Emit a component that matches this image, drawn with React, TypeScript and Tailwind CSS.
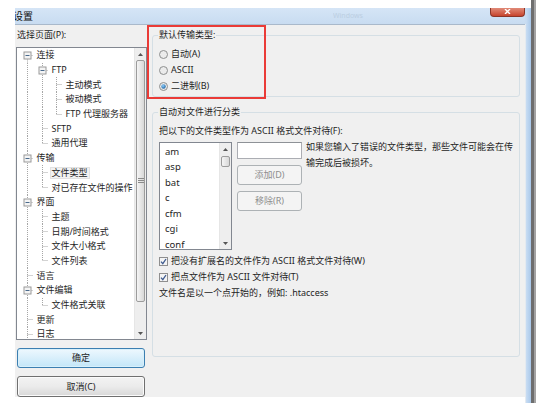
import React from "react";

type TNode = { t: string; l: number; exp?: boolean; sel?: boolean };
const tree: TNode[] = [
  { t: "连接", l: 0, exp: true },
  { t: "FTP", l: 1, exp: true },
  { t: "主动模式", l: 2 },
  { t: "被动模式", l: 2 },
  { t: "FTP 代理服务器", l: 2 },
  { t: "SFTP", l: 1 },
  { t: "通用代理", l: 1 },
  { t: "传输", l: 0, exp: true },
  { t: "文件类型", l: 1, sel: true },
  { t: "对已存在文件的操作", l: 1 },
  { t: "界面", l: 0, exp: true },
  { t: "主题", l: 1 },
  { t: "日期/时间格式", l: 1 },
  { t: "文件大小格式", l: 1 },
  { t: "文件列表", l: 1 },
  { t: "语言", l: 0 },
  { t: "文件编辑", l: 0, exp: true },
  { t: "文件格式关联", l: 1 },
  { t: "更新", l: 0 },
  { t: "日志", l: 0 },
];

function hasNext(i: number): boolean {
  const L = tree[i].l;
  for (let j = i + 1; j < tree.length; j++) {
    if (tree[j].l < L) return false;
    if (tree[j].l === L) return true;
  }
  return L === 0;
}
function ancestorCont(i: number, a: number): boolean {
  for (let j = i - 1; j >= 0; j--) {
    if (tree[j].l === a) return hasNext(j);
  }
  return false;
}

const COLS = [10.5, 25.5, 39.5];
const LINE = "#a6a6a6";

function TreeRow({ i }: { i: number }) {
  const n = tree[i];
  const H = 15;
  const mid = 7.5;
  const c = COLS[n.l];
  const W = c + 7.5;
  const guides: number[] = [];
  for (let a = 0; a < n.l; a++) if (ancestorCont(i, a)) guides.push(COLS[a]);
  const next = hasNext(i);
  return (
    <div className="h-[14.7px] flex items-center">
      <svg width={W} height={H} className="shrink-0 overflow-visible">
        {guides.map((x, k) => (
          <line key={k} x1={x} y1={0} x2={x} y2={H} stroke={LINE} strokeDasharray="1 1" />
        ))}
        <line x1={c} y1={i === 0 ? mid : 0} x2={c} y2={next ? H : mid} stroke={LINE} strokeDasharray="1 1" />
        <line x1={c} y1={mid} x2={c + 6} y2={mid} stroke={LINE} strokeDasharray="1 1" />
        {n.exp && (
          <g>
            <rect x={c - 3.5} y={mid - 3.5} width={7} height={7} fill="#f4f4f4" stroke="#9a9a9a" />
            <line x1={c - 2} y1={mid} x2={c + 2} y2={mid} stroke="#4a6a8c" />
          </g>
        )}
      </svg>
      <span
        className={
          "ml-[0.5px] px-[1px] whitespace-nowrap leading-[10px] " +
          (n.sel ? "bg-[#f2f2f2] outline outline-[#e2e2e2]" : "")
        }
      >
        {n.t}
      </span>
    </div>
  );
}

function Arrow({ up }: { up?: boolean }) {
  return (
    <div className="h-[12px] w-full flex items-center justify-center">
      <svg width="5" height="3">
        <path d={up ? "M0 3 L2.5 0 L5 3Z" : "M0 0 L2.5 3 L5 0Z"} fill="#555" />
      </svg>
    </div>
  );
}

function ScrollBar({ gap, thumb }: { gap: number; thumb: number }) {
  return (
    <div className="w-[12px] h-full flex flex-col bg-[#eeeeee] border-l border-[#e6e6e6]">
      <Arrow up />
      <div className="shrink-0" style={{ height: gap }} />
      <div
        className="shrink-0 mx-[1px] rounded-[2px] border border-[#9c9c9c] bg-linear-to-r from-[#f5f5f5] to-[#d8d8d8] flex items-center justify-center"
        style={{ height: thumb }}
      >
        {thumb > 30 && (
          <svg width="6" height="6">
            <line x1="0" y1="0.5" x2="6" y2="0.5" stroke="#8a8a8a" />
            <line x1="0" y1="2.5" x2="6" y2="2.5" stroke="#8a8a8a" />
            <line x1="0" y1="4.5" x2="6" y2="4.5" stroke="#8a8a8a" />
          </svg>
        )}
      </div>
      <div className="flex-1" />
      <Arrow />
    </div>
  );
}

function Radio({ checked, label }: { checked?: boolean; label: string }) {
  return (
    <div className="h-[16px] flex items-center gap-[3px]">
      <svg width="9" height="9" className="shrink-0">
        <defs>
          <radialGradient id="rg" cx="0.4" cy="0.35" r="0.7">
            <stop offset="0" stopColor="#8fd0ff" />
            <stop offset="1" stopColor="#1b5f9c" />
          </radialGradient>
        </defs>
        <circle cx="4.5" cy="4.5" r="4" fill="#ebebeb" stroke="#8e8f8f" />
        {checked && <circle cx="4.5" cy="4.5" r="2.2" fill="url(#rg)" />}
      </svg>
      <span className="whitespace-nowrap">{label}</span>
    </div>
  );
}

function Check({ label }: { label: string }) {
  return (
    <div className="h-[16px] flex items-center gap-[3px]">
      <svg width="9" height="9" className="shrink-0">
        <rect x="0.5" y="0.5" width="8" height="8" fill="#f4f4f4" stroke="#8f8f8f" />
        <path d="M2 4.6 L3.8 6.6 L7 2" fill="none" stroke="#3f5b8f" strokeWidth="1.3" />
      </svg>
      <span className="whitespace-nowrap">{label}</span>
    </div>
  );
}

export default function App() {
  const listItems = ["am", "asp", "bat", "c", "cfm", "cgi", "conf"];
  return (
    <div className="relative w-[536px] h-[403px] bg-white flex overflow-hidden text-[9px] leading-[12px] text-[#1e1e1e] font-['Noto_Sans','Noto_Sans_CJK_SC',sans-serif]">
      <div className="w-[15px] shrink-0" />
      <div className="w-[510px] shrink-0 flex flex-col">
        <div className="h-[8px]" />
        <div className="h-[16px] flex items-start bg-linear-to-b from-[#d5e5f6] to-[#c8dcf1] overflow-hidden">
          <span className="ml-[-2px] mt-[2px] text-[10px] leading-[12px] text-[#111]">设置</span>
          <span className="ml-[300px] mt-[3px] text-[7px] leading-[9px] text-[#a9bcd0] opacity-50">Windows</span>
          <div className="flex-1" />
          <div className="w-[35px] h-[9px] rounded-b-[4px] border border-t-0 border-[#8c3527] bg-linear-to-b from-[#e08a78] to-[#c6432c] flex items-start justify-center">
            <svg width="7" height="5" className="mt-[1px]">
              <path d="M1 0 L6 5 M6 0 L1 5" stroke="#fff" strokeWidth="1.4" />
            </svg>
          </div>
        </div>
        <div className="h-[373px] bg-[#f0f0f0] border-t border-[#a9b9cb] flex">
          {/* left panel */}
          <div className="w-[132px] shrink-0 flex flex-col pl-[1px]">
            <div className="h-[22px] pt-[4px] pl-[1px] whitespace-nowrap">选择页面(P):</div>
            <div className="h-[293px] w-[131px] border border-[#828790] bg-white flex">
              <div className="flex-1 overflow-hidden">
                {tree.map((_, i) => (
                  <TreeRow key={i} i={i} />
                ))}
              </div>
              <ScrollBar gap={0} thumb={242} />
            </div>
            <button className="mt-[8px] ml-[1px] w-[128px] h-[20px] rounded-[3px] border border-[#3c7fb1] bg-linear-to-b from-[#eef8fe] to-[#c3e6f8] text-[9px] leading-[12px] text-[#1e1e1e] shadow-[inset_0_0_0_1px_#d8f0fb]">
              确定
            </button>
            <button className="mt-[8px] ml-[1px] w-[128px] h-[21px] rounded-[3px] border border-[#707070] bg-linear-to-b from-[#f3f3f3] via-[#ebebeb] to-[#d8d8d8] text-[9px] leading-[12px] text-[#1e1e1e] shadow-[inset_0_0_0_1px_#fbfbfb]">
              取消(C)
            </button>
          </div>
          {/* right panel */}
          <div className="flex-1 flex flex-col px-[5px]">
            <fieldset className="mt-[4px] border border-[#d5dfe5] rounded-[3px] pl-[6px] pt-[5px] pb-[2px]">
              <legend className="-ml-[1px] px-[1px] leading-[12px]">默认传输类型:</legend>
              <Radio label="自动(A)" />
              <Radio label="ASCII" />
              <Radio label="二进制(B)" checked />
            </fieldset>
            <fieldset className="mt-[9px] h-[251px] border border-[#d5dfe5] rounded-[3px] pl-[6px] pt-[7px]">
              <legend className="-ml-[1px] px-[1px] leading-[12px]">自动对文件进行分类</legend>
              <div className="whitespace-nowrap">把以下的文件类型作为 ASCII 格式文件对待(F):</div>
              <div className="mt-[5px] flex">
                <div className="w-[73px] h-[108px] border border-[#828790] bg-white flex">
                  <div className="flex-1 pl-[5px] pt-[1px]">
                    {listItems.map((s) => (
                      <div key={s} className="h-[15.5px] flex items-center text-[9.5px]">
                        {s}
                      </div>
                    ))}
                  </div>
                  <ScrollBar gap={1} thumb={11} />
                </div>
                <div className="ml-[5px] w-[65px] flex flex-col">
                  <div className="h-[17px] border border-[#abadb3] border-t-[#8e9297] bg-white" />
                  <div className="mt-[6px] h-[20px] rounded-[3px] border border-[#adb2b5] bg-[#f4f4f4] text-[#8d8d8d] flex items-center justify-center">
                    添加(D)
                  </div>
                  <div className="mt-[6px] h-[20px] rounded-[3px] border border-[#adb2b5] bg-[#f4f4f4] text-[#8d8d8d] flex items-center justify-center">
                    移除(R)
                  </div>
                </div>
                <div className="ml-[4px] -mt-[3px] leading-[16px] whitespace-nowrap">
                  如果您输入了错误的文件类型，那些文件可能会在传
                  <br />
                  输完成后被损坏。
                </div>
              </div>
              <div className="mt-[3px]">
                <Check label="把没有扩展名的文件作为 ASCII 格式文件对待(W)" />
                <Check label="把点文件作为 ASCII 文件对待(T)" />
                <div className="h-[16px] flex items-center whitespace-nowrap">
                  文件名是以一个点开始的，例如: .htaccess
                </div>
              </div>
            </fieldset>
          </div>
        </div>
        <div className="flex-1 bg-white" />
      </div>
      {/* right window frame */}
      <div className="flex-1 flex">
        <div className="w-[1px] flex flex-col">
          <div className="h-[8px] bg-white" />
          <div className="h-[16px] bg-[#c8dcf1]" />
          <div className="flex-1 bg-[#e4eaf0]" />
        </div>
        <div className="w-[5px] flex flex-col">
          <div className="h-[8px] bg-white" />
          <div className="flex-1 bg-linear-to-r from-[#c9ddf3] to-[#a9c8ea]" />
        </div>
        <div className="w-[3px] bg-[#6e6e6e]" />
        <div className="flex-1 bg-[#a3a3a3]" />
      </div>
      {/* red annotation */}
      <div className="absolute left-[147px] top-[25px] w-[119px] h-[74px] border-2 border-[#ea3b37] pointer-events-none" />
    </div>
  );
}
